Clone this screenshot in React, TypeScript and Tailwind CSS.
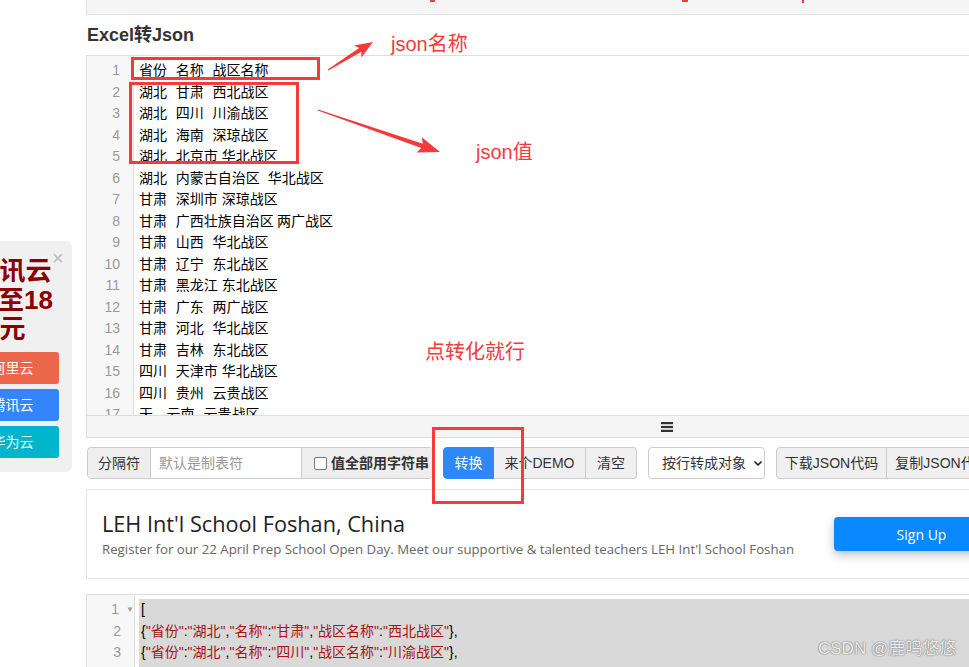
import { ChevronDown } from "lucide-react";

const RED = "#f43a3a";

const rows: string[][] = [
  ["省份", "名称", "战区名称"],
  ["湖北", "甘肃", "西北战区"],
  ["湖北", "四川", "川渝战区"],
  ["湖北", "海南", "深琼战区"],
  ["湖北", "北京市", "华北战区"],
  ["湖北", "内蒙古自治区", "华北战区"],
  ["甘肃", "深圳市", "深琼战区"],
  ["甘肃", "广西壮族自治区", "两广战区"],
  ["甘肃", "山西", "华北战区"],
  ["甘肃", "辽宁", "东北战区"],
  ["甘肃", "黑龙江", "东北战区"],
  ["甘肃", "广东", "两广战区"],
  ["甘肃", "河北", "华北战区"],
  ["甘肃", "吉林", "东北战区"],
  ["四川", "天津市", "华北战区"],
  ["四川", "贵州", "云贵战区"],
  ["天", "云南", "云贵战区"],
];

// tab stops as the editor draws them
const STOP = 9.2;
function cellWidths(cells: string[], line: number) {
  if (line === 17) return [27.6, 36.8, 56];
  return cells.map((c) => {
    const end = c.length * 14;
    return Math.ceil((end + 1) / STOP) * STOP;
  });
}

const jsonRows = [
  ["湖北", "甘肃", "西北战区"],
  ["湖北", "四川", "川渝战区"],
  ["湖北", "海南", "深琼战区"],
];
const keys = ["省份", "名称", "战区名称"];

function Arrow({ x1, y1, x2, y2, head, half }: { x1: number; y1: number; x2: number; y2: number; head: number; half: number }) {
  const len = Math.hypot(x2 - x1, y2 - y1);
  const ux = (x2 - x1) / len;
  const uy = (y2 - y1) / len;
  const nx = -uy;
  const ny = ux;
  const neckX = x2 - ux * head;
  const neckY = y2 - uy * head;
  const backX = neckX - ux * 3;
  const backY = neckY - uy * 3;
  const p = (x: number, y: number) => `${x.toFixed(1)},${y.toFixed(1)}`;
  const pts = [
    p(x1 + nx * 0.6, y1 + ny * 0.6),
    p(neckX + nx * 2.2, neckY + ny * 2.2),
    p(backX + nx * half, backY + ny * half),
    p(x2, y2),
    p(backX - nx * half, backY - ny * half),
    p(neckX - nx * 2.2, neckY - ny * 2.2),
    p(x1 - nx * 0.6, y1 - ny * 0.6),
  ].join(" ");
  return <polygon points={pts} fill={RED} />;
}

function LeftAd() {
  return (
    <div className="absolute left-[-47px] top-[241px] w-[119px] h-[231px] bg-[#f0f0f0] rounded-[6px] pt-[16px]">
      <span className="absolute left-[99px] top-[7px] text-[20px] leading-[20px] text-[#bbb]">×</span>
      <div className="text-center text-[26px] leading-[29px] font-bold text-[#8b0000]">
        腾讯云<br />低至18<br />元
      </div>
      <div className="mt-[8px] flex flex-col gap-[5px] items-center">
        <div className="w-[92px] h-[32px] rounded-[3px] bg-[#ec664b] text-white text-[14px] flex items-center justify-center">阿里云</div>
        <div className="w-[92px] h-[32px] rounded-[3px] bg-[#3485fb] text-white text-[14px] flex items-center justify-center">腾讯云</div>
        <div className="w-[92px] h-[32px] rounded-[3px] bg-[#00b5cc] text-white text-[14px] flex items-center justify-center">华为云</div>
      </div>
    </div>
  );
}

function Annotations() {
  return (
    <>
      <div className="absolute left-[430px] top-0 w-[5px] h-[2px] bg-[#f43a3a]" />
      <div className="absolute left-[682px] top-0 w-[6px] h-[2px] bg-[#f43a3a]" />
      <div className="absolute left-[802px] top-0 w-[2px] h-[3px] bg-[#f0306a]" />

      <div className="absolute left-[131px] top-[57px] w-[189px] h-[23px] border-[3px] border-[#f43a3a]" />
      <div className="absolute left-[129px] top-[82px] w-[170px] h-[82px] border-[3px] border-[#f43a3a]" />
      <div className="absolute left-[432px] top-[427px] w-[92px] h-[77px] border-[3px] border-[#f43a3a]" />

      <svg className="absolute left-0 top-0 pointer-events-none" width="969" height="667">
        <Arrow x1={328} y1={70} x2={373} y2={42} head={15} half={7} />
        <Arrow x1={318} y1={110} x2={440} y2={152} head={19} half={8} />
      </svg>

      <div className="absolute left-[391px] top-[30px] text-[20px] leading-[28px] text-[#f43a3a]">json名称</div>
      <div className="absolute left-[476px] top-[138px] text-[20px] leading-[28px] text-[#f43a3a]">json值</div>
      <div className="absolute left-[425px] top-[338px] text-[20px] leading-[28px] text-[#f43a3a]">点转化就行</div>

      <div className="absolute left-[818px] top-[637px] text-[17px] leading-[24px] text-[#ececec] [text-shadow:0_0_1px_#666,0_0_2px_#999]">
        CSDN @鹿鸣悠悠
      </div>
    </>
  );
}

export default function App() {
  return (
    <div className="relative w-[969px] h-[667px] overflow-hidden bg-white text-[#333] font-['Liberation_Sans','Noto_Sans_CJK_SC',sans-serif]">
      <div className="ml-[86px] w-[900px]">
        <div className="h-[15px] bg-[#f5f5f5] border-b border-l border-[#e5e5e5]" />

        <h2 className="h-[40px] flex items-center pl-px text-[18px] font-bold text-[#333]">Excel转Json</h2>

        {/* input editor */}
        <div className="border-l border-[#ddd]">
          <div className="flex h-[360px] border-t border-[#ddd] overflow-hidden">
            <div className="w-[47px] shrink-0 bg-[#f7f7f7] border-r border-[#ddd] pt-[4px] pr-[13px] text-right text-[14px] leading-[21.5px] text-[#999]">
              {rows.map((_, i) => (
                <div key={i}>{i + 1}</div>
              ))}
            </div>
            <div className="flex-1 pt-[4px] pl-[5px] text-[14px] leading-[21.5px] text-black">
              {rows.map((cells, i) => {
                const widths = cellWidths(cells, i + 1);
                return (
                  <div key={i} className="whitespace-nowrap">
                    {cells.map((c, j) => (
                      <span key={j} className="inline-block" style={{ width: j < cells.length - 1 ? widths[j] : undefined }}>
                        {c}
                      </span>
                    ))}
                  </div>
                );
              })}
            </div>
          </div>
          <div className="h-[23px] bg-[#f5f5f5] border-y border-[#ddd] flex items-center">
            <svg className="ml-[574px]" width="12" height="10" viewBox="0 0 12 10">
              <rect x="0" y="0" width="12" height="2.2" fill="#333" />
              <rect x="0" y="3.9" width="12" height="2.2" fill="#333" />
              <rect x="0" y="7.8" width="12" height="2.2" fill="#333" />
            </svg>
          </div>
        </div>

        {/* toolbar */}
        <div className="mt-[9px] flex items-center h-[32px] text-[14px] text-[#333] whitespace-nowrap">
          <div className="flex h-[32px] w-[346px] shrink-0 ml-px rounded-[4px] border border-[#ccc] overflow-hidden">
            <div className="w-[63px] bg-[#eee] border-r border-[#ccc] flex items-center justify-center">分隔符</div>
            <div className="w-[150px] bg-white flex items-center pl-[8px] text-[#999]">默认是制表符</div>
            <div className="flex-1 bg-[#eee] border-l border-[#ccc] flex items-center pl-[12px] gap-[4px]">
              <span className="w-[13px] h-[13px] rounded-[2px] border border-[#767676] bg-white" />
              <span className="font-bold">值全部用字符串</span>
            </div>
          </div>

          <div className="ml-[10px] flex h-[32px] shrink-0">
            <div className="w-[51px] bg-[#2f88f8] border border-[#2f88f8] rounded-l-[4px] text-white flex items-center justify-center">转换</div>
            <div className="w-[92px] bg-[#f0f0f0] border border-[#ccc] border-l-0 flex items-center justify-center">来个DEMO</div>
            <div className="w-[51px] bg-[#f0f0f0] border border-[#ccc] border-l-0 rounded-r-[4px] flex items-center justify-center">清空</div>
          </div>

          <div className="ml-[11px] w-[117px] h-[32px] shrink-0 rounded-[4px] border border-[#ccc] bg-white flex items-center pl-[13px]">
            <span>按行转成对象</span>
            <ChevronDown size={13} strokeWidth={3.5} className="ml-[6px] text-[#222]" />
          </div>

          <div className="ml-[11px] flex h-[32px] shrink-0">
            <div className="w-[111px] bg-[#f0f0f0] border border-[#ccc] rounded-l-[4px] flex items-center justify-center">下载JSON代码</div>
            <div className="w-[111px] bg-[#f0f0f0] border border-[#ccc] border-l-0 flex items-center justify-center">复制JSON代码</div>
          </div>
        </div>

        {/* ad card */}
        <div className="mt-[10px] h-[90px] border border-[#e5e5e5] flex items-center">
          <div className="w-[747px] shrink-0 pl-[15px] font-['Open_Sans',sans-serif]">
            <div className="text-[21.7px] leading-[26px] text-[#222]">LEH Int'l School Foshan, China</div>
            <div className="mt-[3px] text-[13.25px] leading-[18px] text-[#666] whitespace-nowrap">
              Register for our 22 April Prep School Open Day. Meet our supportive &amp; talented teachers LEH Int'l School Foshan
            </div>
          </div>
          <div className="w-[175px] h-[34px] shrink-0 rounded-[4px] bg-[#0a88ff] text-white text-[14px] font-medium font-['Open_Sans',sans-serif] flex items-center justify-center shadow-[0_4px_10px_rgba(0,0,0,0.25)]">
            Sign Up
          </div>
        </div>

        {/* output editor */}
        <div className="mt-[15px] flex border-t border-l border-[#ddd] h-[80px]">
          <div className="w-[48px] shrink-0 bg-[#f7f7f7] border-r border-[#ddd] pt-[4px] text-[14px] leading-[21.5px] text-[#999]">
            {[1, 2, 3, 4].map((n) => (
              <div key={n} className="flex items-center">
                <span className="w-[34px] text-right">{n}</span>
                {n === 1 && <span className="ml-[7px] text-[8px] leading-none">▼</span>}
              </div>
            ))}
          </div>
          <div className="flex-1 pt-[4px] pl-[4px]">
            <div className="bg-[#d9d9d9] pl-[2px] text-[14px] leading-[21.5px] text-black whitespace-nowrap">
              <div>[</div>
              {jsonRows.map((vals, i) => (
                <div key={i}>
                  {"{"}
                  {keys.map((k, j) => (
                    <span key={j}>
                      <span className="text-[#aa1111]">"{k}"</span>:<span className="text-[#aa1111]">"{vals[j]}"</span>
                      {j < keys.length - 1 ? "," : ""}
                    </span>
                  ))}
                  {"},"}
                </div>
              ))}
            </div>
          </div>
        </div>
      </div>

      <LeftAd />
      <Annotations />
    </div>
  );
}
